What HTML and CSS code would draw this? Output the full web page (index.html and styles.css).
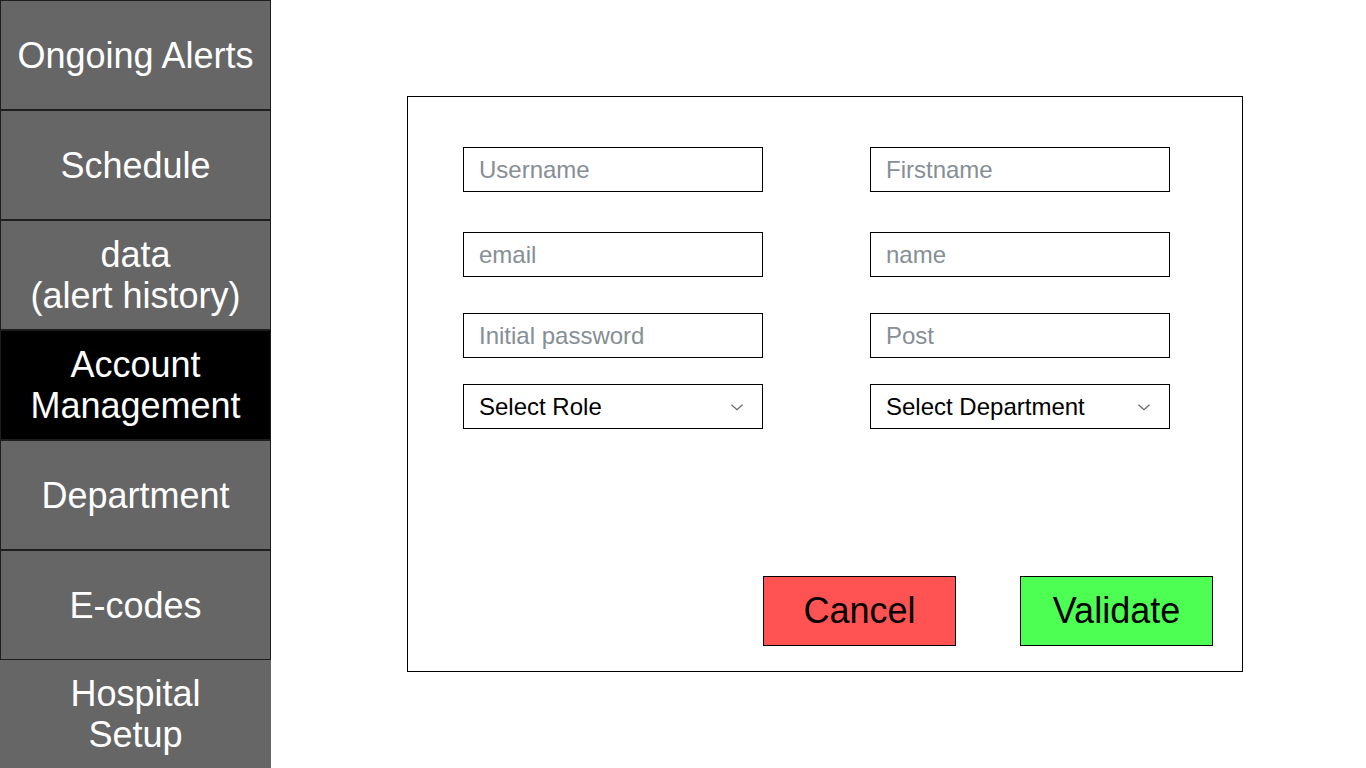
FILE: index.html
```html
<!DOCTYPE html>
<html lang="en">
<head>
<meta charset="utf-8">
<title>Account Management</title>
<link rel="stylesheet" href="styles.css">
</head>
<body>
<nav class="sidebar">
  <div class="nav-item">Ongoing Alerts</div>
  <div class="nav-item">Schedule</div>
  <div class="nav-item">data<br>(alert history)</div>
  <div class="nav-item active">Account<br>Management</div>
  <div class="nav-item">Department</div>
  <div class="nav-item">E-codes</div>
  <div class="nav-item last">Hospital<br>Setup</div>
</nav>
<main class="main">
  <form class="card">
    <div class="fields">
      <div class="row row-1">
        <input class="field" type="text" placeholder="Username">
        <input class="field" type="text" placeholder="Firstname">
      </div>
      <div class="row row-2">
        <input class="field" type="text" placeholder="email">
        <input class="field" type="text" placeholder="name">
      </div>
      <div class="row row-3">
        <input class="field" type="text" placeholder="Initial password">
        <input class="field" type="text" placeholder="Post">
      </div>
      <div class="row row-4">
        <div class="field select"><span>Select Role</span>
          <svg class="chev" width="12" height="7" viewBox="0 0 12 7"><polyline points="0.5,0.8 6,5.8 11.5,0.8" fill="none" stroke="#666" stroke-width="1.2"/></svg>
        </div>
        <div class="field select"><span>Select Department</span>
          <svg class="chev" width="12" height="7" viewBox="0 0 12 7"><polyline points="0.5,0.8 6,5.8 11.5,0.8" fill="none" stroke="#666" stroke-width="1.2"/></svg>
        </div>
      </div>
    </div>
    <div class="actions">
      <button type="button" class="btn btn-cancel">Cancel</button>
      <button type="button" class="btn btn-validate">Validate</button>
    </div>
  </form>
</main>
</body>
</html>
```
FILE: styles.css
```css
* { box-sizing: border-box; }
html, body { margin: 0; padding: 0; }
body {
  width: 1366px;
  height: 768px;
  display: flex;
  background: #fff;
  font-family: "Liberation Sans", Arial, sans-serif;
  overflow: hidden;
}
.sidebar {
  width: 271px;
  height: 768px;
  display: flex;
  flex-direction: column;
  flex-shrink: 0;
}
.nav-item {
  flex: 1 1 0;
  display: flex;
  align-items: center;
  justify-content: center;
  text-align: center;
  background: #666666;
  color: #fff;
  font-size: 36px;
  line-height: 41px;
  border: 1px solid #1e1e1e;
}
.nav-item.active { background: #000; }
.nav-item.last { border: none; }
.main {
  flex: 1;
  padding: 96px 0 0 136px;
}
.card {
  width: 836px;
  height: 576px;
  border: 1px solid #000;
  margin: 0;
  padding: 50px 29px 25px 55px;
  display: flex;
  flex-direction: column;
}
.fields { display: flex; flex-direction: column; }
.row { display: flex; gap: 107px; }
.row-2 { margin-top: 40px; }
.row-3 { margin-top: 36px; }
.row-4 { margin-top: 26px; }
.field {
  width: 300px;
  height: 45px;
  border: 1px solid #000;
  padding: 0 15px;
  font-family: "Liberation Sans", Arial, sans-serif;
  font-size: 24px;
  color: #000;
  background: #fff;
  outline: none;
  border-radius: 0;
  margin: 0;
}
.field::placeholder { color: #868e96; opacity: 1; }
.select {
  display: flex;
  align-items: center;
  justify-content: space-between;
  padding-right: 19px;
}
.chev { display: block; margin-top: 1px; }
.actions {
  margin-top: auto;
  display: flex;
  justify-content: flex-end;
  gap: 64px;
}
.btn {
  width: 193px;
  height: 70px;
  border: 1px solid #000;
  font-family: "Liberation Sans", Arial, sans-serif;
  font-size: 36px;
  color: #000;
  padding: 0;
  border-radius: 0;
}
.btn-cancel { background: #ff5252; }
.btn-validate { background: #4cff52; }
```
